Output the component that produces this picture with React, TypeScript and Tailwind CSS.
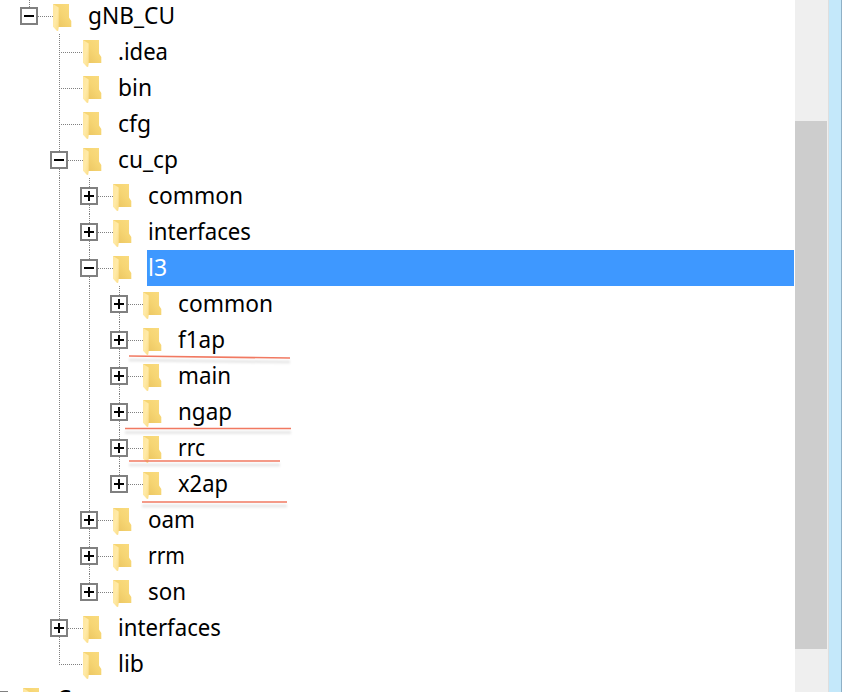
type Toggle = "plus" | "minus" | null;

interface TreeRow {
  label: string;
  depth: number;
  toggle: Toggle;
  last?: boolean;
  guides: boolean[];
  width: number;
  selected?: boolean;
}

const rows: TreeRow[] = [
  { label: "gNB_CU", depth: 1, toggle: "minus", last: true, guides: [], width: 88 },
  { label: ".idea", depth: 2, toggle: null, guides: [false], width: 51 },
  { label: "bin", depth: 2, toggle: null, guides: [false], width: 35 },
  { label: "cfg", depth: 2, toggle: null, guides: [false], width: 34 },
  { label: "cu_cp", depth: 2, toggle: "minus", guides: [false], width: 61 },
  { label: "common", depth: 3, toggle: "plus", guides: [false, true], width: 96 },
  { label: "interfaces", depth: 3, toggle: "plus", guides: [false, true], width: 104 },
  { label: "l3", depth: 3, toggle: "minus", guides: [false, true], width: 20, selected: true },
  { label: "common", depth: 4, toggle: "plus", guides: [false, true, true], width: 96 },
  { label: "f1ap", depth: 4, toggle: "plus", guides: [false, true, true], width: 48 },
  { label: "main", depth: 4, toggle: "plus", guides: [false, true, true], width: 54 },
  { label: "ngap", depth: 4, toggle: "plus", guides: [false, true, true], width: 55 },
  { label: "rrc", depth: 4, toggle: "plus", guides: [false, true, true], width: 28 },
  { label: "x2ap", depth: 4, toggle: "plus", last: true, guides: [false, true, true], width: 51 },
  { label: "oam", depth: 3, toggle: "plus", guides: [false, true], width: 48 },
  { label: "rrm", depth: 3, toggle: "plus", guides: [false, true], width: 38 },
  { label: "son", depth: 3, toggle: "plus", last: true, guides: [false, true], width: 39 },
  { label: "interfaces", depth: 2, toggle: "plus", guides: [false], width: 104 },
  { label: "lib", depth: 2, toggle: null, last: true, guides: [false], width: 27 },
];

const vDots = "bg-[repeating-linear-gradient(to_bottom,#808080_0_1px,transparent_1px_2px)]";
const hDots = "bg-[repeating-linear-gradient(to_right,#808080_0_1px,transparent_1px_2px)]";

function Guide({ on }: { on: boolean }) {
  return (
    <div className="flex h-9 w-[30px] shrink-0 pl-[15px]">
      {on && <div className={`h-9 w-px ${vDots}`} />}
    </div>
  );
}

function Branch({ toggle, last }: { toggle: Toggle; last?: boolean }) {
  if (!toggle) {
    return (
      <div className="flex h-9 w-[39px] shrink-0 items-start pl-[15px]">
        <div className={`w-px shrink-0 ${last ? "h-[19px]" : "h-9"} ${vDots}`} />
        <div className={`ml-px mt-[18px] h-px flex-1 ${hDots}`} />
      </div>
    );
  }
  return (
    <div className="flex h-9 w-[39px] shrink-0 pl-[6px]">
      <div className="flex w-[18px] shrink-0 flex-col">
        <div className={`ml-[9px] h-[9px] w-px shrink-0 ${vDots}`} />
        <div className="flex size-[18px] shrink-0 items-center justify-center border-2 border-[#808080] bg-white">
          <svg width="10" height="10" viewBox="0 0 10 10" shapeRendering="crispEdges">
            <rect x="0" y="4" width="10" height="2" />
            {toggle === "plus" && <rect x="4" y="0" width="2" height="10" />}
          </svg>
        </div>
        {!last && <div className={`ml-[9px] h-[9px] w-px shrink-0 ${vDots}`} />}
      </div>
      <div className={`mt-[18px] h-px flex-1 ${hDots}`} />
    </div>
  );
}

function Folder() {
  return (
    <svg className="mt-[6px] shrink-0" width="19" height="27" viewBox="0 0 19 27">
      <defs>
        <linearGradient id="back" x1="0" y1="1" x2="1" y2="0">
          <stop offset="0" stopColor="#e9c25d" />
          <stop offset="0.55" stopColor="#f6d573" />
          <stop offset="1" stopColor="#fadc80" />
        </linearGradient>
        <linearGradient id="flap" x1="0" y1="0" x2="1" y2="1">
          <stop offset="0" stopColor="#ffe59a" />
          <stop offset="0.5" stopColor="#ffeaa8" />
          <stop offset="1" stopColor="#fbdd88" />
        </linearGradient>
      </defs>
      <path d="M0 0H16V13.5L18.3 17V23H4L0 20Z" fill="url(#back)" />
      <path d="M0 0L5.7 3.6V23.5L5.2 26.8L4 27L0 22.8Z" fill="url(#flap)" />
    </svg>
  );
}

function Label({ text, width, selected }: { text: string; width: number; selected?: boolean }) {
  return (
    <svg className="shrink-0 overflow-visible" width={width} height="36">
      <text
        x="0"
        y="26"
        textLength={width - 1}
        lengthAdjust="spacingAndGlyphs"
        className={`font-['Noto_Sans','Open_Sans',sans-serif] text-[23.5px] ${selected ? "fill-white" : "fill-black"}`}
      >
        {text}
      </text>
    </svg>
  );
}

function Row({ row }: { row: TreeRow }) {
  return (
    <div className="flex h-9 shrink-0">
      <div className="w-[14px] shrink-0" />
      {row.guides.map((on, i) => (
        <Guide key={i} on={on} />
      ))}
      <Branch toggle={row.toggle} last={row.last} />
      <Folder />
      <div className={`ml-[15px] flex h-9 min-w-0 flex-1 pl-px ${row.selected ? "bg-[#3e98ff]" : ""}`}>
        <Label text={row.label} width={row.width} selected={row.selected} />
      </div>
    </div>
  );
}

const strokes = [
  { x1: 129, y1: 356, x2: 290, y2: 358 },
  { x1: 125, y1: 428.5, x2: 291, y2: 428.5 },
  { x1: 129, y1: 461, x2: 280, y2: 461 },
  { x1: 142, y1: 502, x2: 287, y2: 502 },
];

export default function App() {
  return (
    <div className="relative flex h-[692px] w-[842px] overflow-hidden bg-white">
      <div className="-mt-0.5 flex h-[694px] w-[794px] shrink-0 flex-col overflow-hidden">
        {rows.map((row, i) => (
          <Row key={i} row={row} />
        ))}
        <div className="flex h-9 shrink-0">
          <div className="-ml-[10px] mt-[9px] size-[18px] shrink-0 border-2 border-[#808080]" />
          <div className={`mt-[18px] h-px w-[15px] ${hDots}`} />
          <Folder />
          <div className="-mt-px ml-[15px]">
            <Label text="G" width={16} />
          </div>
        </div>
      </div>
      <div className="ml-px flex w-8 shrink-0 flex-col bg-[#efefef]">
        <div className="mt-[121px] h-[528px] w-8 bg-[#cdcdcd]" />
      </div>
      <div className="w-px bg-[#efefef]" />
      <div className="w-px bg-[#dedede]" />
      <div className="w-3 bg-[#c4e8fa]" />
      <div className="w-px bg-[#8fb0c6]" />
      <svg className="pointer-events-none absolute inset-0" width="842" height="692">
        <defs>
          <filter id="shade" x="0" y="0" width="842" height="692" filterUnits="userSpaceOnUse">
            <feGaussianBlur stdDeviation="1.3" />
          </filter>
        </defs>
        {strokes.map((s, i) => (
          <g key={i} strokeWidth="1.6">
            <line x1={s.x1} y1={s.y1 + 4} x2={s.x2} y2={s.y2 + 4} stroke="#000" strokeOpacity="0.09" strokeWidth="3" filter="url(#shade)" />
            <line x1={s.x1} y1={s.y1} x2={s.x2} y2={s.y2} stroke="#f17961" />
          </g>
        ))}
      </svg>
    </div>
  );
}
